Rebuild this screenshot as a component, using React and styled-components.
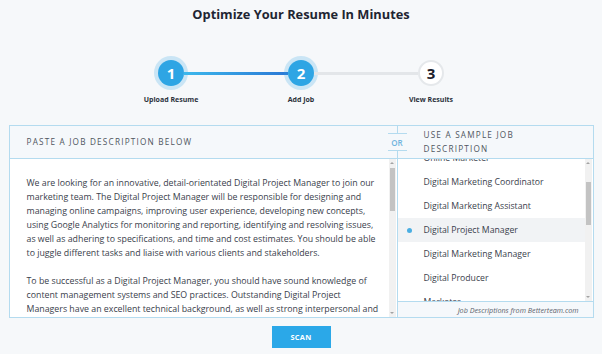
import React, { useLayoutEffect, useRef } from 'react';
import styled, { createGlobalStyle, css } from 'styled-components';

const GlobalStyle = createGlobalStyle`
    * { box-sizing: border-box; }
    body {
        margin: 0;
        background: #f6f8fa;
        font-family: "Open Sans", "Noto Sans", sans-serif;
        color: #3b4350;
    }
`;

const Page = styled.div`
    width: 602px;
    height: 354px;
    padding-top: 4px;
    overflow: hidden;
`;

const Title = styled.h1`
    margin: 0;
    font-size: 12.8px;
    line-height: 20px;
    font-weight: 700;
    color: #1e2532;
    text-align: center;
`;

const Stepper = styled.div`
    display: flex;
    justify-content: center;
    align-items: flex-start;
    margin-top: 36px;
`;

const Step = styled.div`
    width: 26px;
    display: flex;
    flex-direction: column;
    align-items: center;
`;

const Circle = styled.div`
    width: 26px;
    height: 26px;
    border-radius: 50%;
    display: flex;
    align-items: center;
    justify-content: center;
    font-size: 15px;
    font-weight: 700;
    ${({ $active }) => $active ? css`
        background: #2ea5e4;
        color: #fff;
        box-shadow: 0 0 0 4px rgba(46, 165, 228, 0.22);
    ` : css`
        background: #fff;
        color: #1b202b;
        border: 2px solid #e5e8eb;
    `}
`;

const StepLabel = styled.div`
    margin-top: 9px;
    font-size: 7px;
    line-height: 10px;
    font-weight: 700;
    color: #2b313b;
    white-space: nowrap;
`;

const Connector = styled.div`
    width: 104px;
    height: 3px;
    margin-top: 11.5px;
    background: ${({ $active }) => $active ? 'linear-gradient(to right, #3cb8ec, #2a78d5)' : '#e3e6e9'};
`;

const Panel = styled.div`
    width: 585px;
    margin: 20px auto 0;
    border: 1px solid #b4dbef;
    display: flex;
    background: #fff;
`;

const LeftCol = styled.div`
    position: relative;
    width: 388px;
    border-right: 1px solid #b4dbef;
    display: flex;
    flex-direction: column;
`;

const RightCol = styled.div`
    flex: 1;
    display: flex;
    flex-direction: column;
    min-width: 0;
`;

const Header = styled.div`
    height: 33px;
    background: #f5f8fb;
    border-bottom: 1px solid #b4dbef;
    display: flex;
    align-items: center;
    padding-left: ${({ $pad }) => $pad}px;
`;

const HeaderText = styled.div`
    font-size: 8.2px;
    line-height: 14px;
    letter-spacing: 1.2px;
    color: #4f5660;
    max-width: ${({ $max }) => $max || 'none'};
`;

const OrBadge = styled.div`
    position: absolute;
    top: 7px;
    right: -10px;
    width: 19px;
    height: 18px;
    background: #f5f8fb;
    border-top: 1px solid #b4dbef;
    border-bottom: 1px solid #b4dbef;
    display: flex;
    align-items: center;
    justify-content: center;
    font-size: 8px;
    font-weight: 600;
    color: #6fb4de;
`;

const Body = styled.div`
    height: ${({ $h }) => $h}px;
    display: flex;
`;

const TextArea = styled.div`
    flex: 1;
    overflow: hidden;
    padding: 17px 4px 0 17px;
    font-size: 8.8px;
    line-height: 14px;
    color: #3a414c;
    white-space: nowrap;

    p {
        margin: 0 0 14px;
    }
`;

const Track = styled.div`
    width: 7px;
    background: #f1f1f1;
    display: flex;
    flex-direction: column;
    align-items: center;
    justify-content: space-between;
    position: relative;
    margin-right: 1px;
`;

const Arrow = styled.div`
    width: 0;
    height: 0;
    margin: 3px 0;
    border-left: 2px solid transparent;
    border-right: 2px solid transparent;
    ${({ $down }) => $down
        ? 'border-top: 2px solid #a3a3a3;'
        : 'border-bottom: 2px solid #a3a3a3;'}
`;

const Thumb = styled.div`
    position: absolute;
    left: 1px;
    width: 5px;
    background: #c3c3c3;
`;

const ListViewport = styled.div`
    flex: 1;
    overflow: hidden;
`;

const Item = styled.div`
    height: 24px;
    display: flex;
    align-items: center;
    padding-left: 9px;
    font-size: 8.7px;
    color: #3a414c;
    background: ${({ $selected }) => $selected ? '#f1f3f5' : 'transparent'};
`;

const DotSlot = styled.span`
    width: 17px;
    display: flex;
    align-items: center;
`;

const Dot = styled.span`
    width: 5px;
    height: 5px;
    border-radius: 50%;
    background: #4aaee2;
`;

const Footer = styled.div`
    height: 16px;
    border-top: 1px solid #b4dbef;
    background: #f5f8fb;
    display: flex;
    align-items: center;
    justify-content: flex-end;
    padding-right: 14px;
    font-size: 7.2px;
    font-style: italic;
    color: #5b626c;
`;

const ScanButton = styled.button`
    display: block;
    margin: 8px auto 0;
    width: 59px;
    height: 22px;
    border: none;
    background: #2ba8e8;
    color: #fff;
    font-family: "Open Sans", sans-serif;
    font-size: 7.4px;
    font-weight: 700;
    letter-spacing: 0.3px;
    cursor: pointer;
`;

const steps = [
    { n: 1, label: 'Upload Resume', active: true },
    { n: 2, label: 'Add Job', active: true },
    { n: 3, label: 'View Results', active: false },
];

const jobs = [
    'Content Marketing Manager',
    'Content Writer',
    'Copywriter',
    'Digital Marketing Specialist',
    'Online Marketer',
    'Digital Marketing Coordinator',
    'Digital Marketing Assistant',
    'Digital Project Manager',
    'Digital Marketing Manager',
    'Digital Producer',
    'Marketer',
    'Marketing Analyst',
];

// pasted description, broken where the textarea wraps it
const description = [
    [
        'We are looking for an innovative, detail-orientated Digital Project Manager to join our',
        'marketing team. The Digital Project Manager will be responsible for designing and',
        'managing online campaigns, improving user experience, developing new concepts,',
        'using Google Analytics for monitoring and reporting, identifying and resolving issues,',
        'as well as adhering to specifications, and time and cost estimates. You should be able',
        'to juggle different tasks and liaise with various clients and stakeholders.',
    ],
    [
        'To be successful as a Digital Project Manager, you should have sound knowledge of',
        'content management systems and SEO practices. Outstanding Digital Project',
        'Managers have an excellent technical background, as well as strong interpersonal and',
        'communication skills.',
    ],
];

const ScrollBar = ({ top, height }) => (
    <Track>
        <Arrow />
        <Thumb style={{ top, height }} />
        <Arrow $down />
    </Track>
);

const App = () => {
    const listRef = useRef(null);

    // start the sample list scrolled so "Online Marketer" sits under the header
    useLayoutEffect(() => {
        if (listRef.current) listRef.current.scrollTop = 4 * 24 + 13;
    }, []);

    return (
        <Page>
            <GlobalStyle />
            <Title>Optimize Your Resume In Minutes</Title>

            <Stepper>
                {steps.map((s, i) => (
                    <React.Fragment key={s.n}>
                        {i > 0 && <Connector $active={s.active} />}
                        <Step>
                            <Circle $active={s.active}>{s.n}</Circle>
                            <StepLabel>{s.label}</StepLabel>
                        </Step>
                    </React.Fragment>
                ))}
            </Stepper>

            <Panel>
                <LeftCol>
                    <Header $pad={17}>
                        <HeaderText>PASTE A JOB DESCRIPTION BELOW</HeaderText>
                    </Header>
                    <OrBadge>OR</OrBadge>
                    <Body $h={158}>
                        <TextArea>
                            {description.map((para, i) => (
                                <p key={i}>
                                    {para.map((line, j) => (
                                        <React.Fragment key={j}>
                                            {j > 0 && <br />}
                                            {line}
                                        </React.Fragment>
                                    ))}
                                </p>
                            ))}
                        </TextArea>
                        <ScrollBar top={9} height={43} />
                    </Body>
                </LeftCol>

                <RightCol>
                    <Header $pad={26}>
                        <HeaderText $max="120px">USE A SAMPLE JOB DESCRIPTION</HeaderText>
                    </Header>
                    <Body $h={142}>
                        <ListViewport ref={listRef}>
                            {jobs.map((job) => {
                                const selected = job === 'Digital Project Manager';
                                return (
                                    <Item key={job} $selected={selected}>
                                        <DotSlot>{selected && <Dot />}</DotSlot>
                                        {job}
                                    </Item>
                                );
                            })}
                        </ListViewport>
                        <ScrollBar top={23} height={43} />
                    </Body>
                    <Footer>Job Descriptions from Betterteam.com</Footer>
                </RightCol>
            </Panel>

            <ScanButton>SCAN</ScanButton>
        </Page>
    );
};

export default App;
